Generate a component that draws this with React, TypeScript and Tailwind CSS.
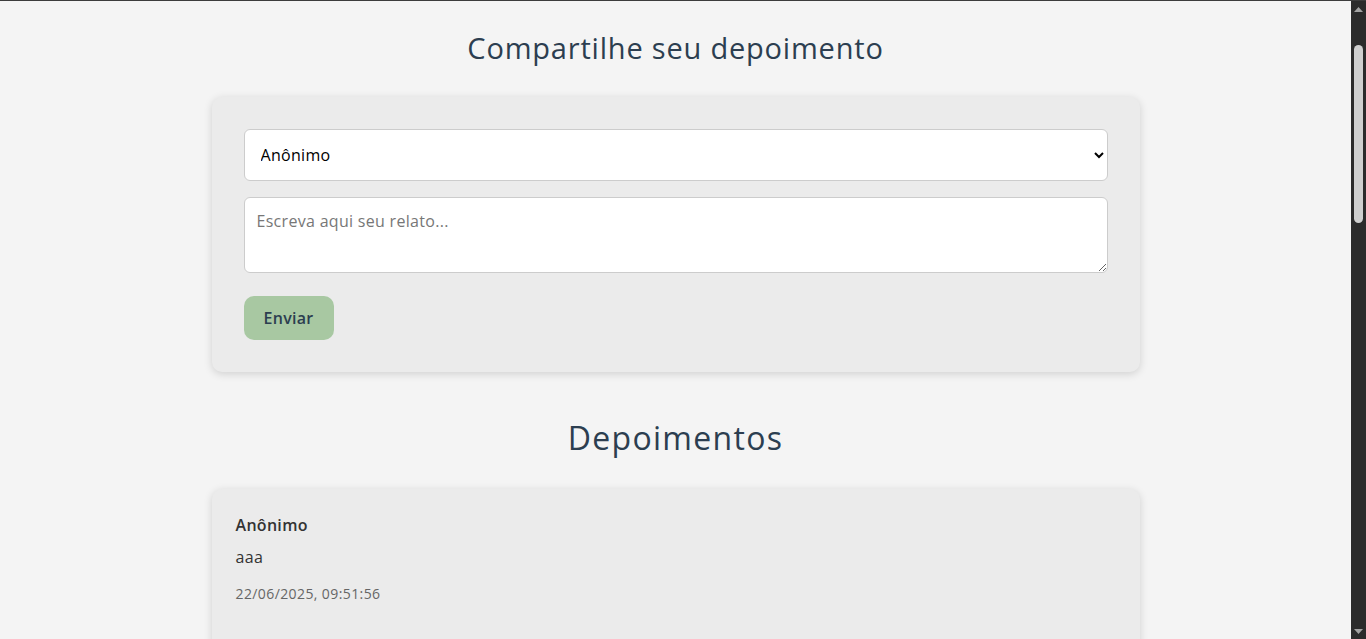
import { useState } from 'react'

type Depoimento = {
  id: number
  autor: string
  texto: string
  data: string
}

const depoimentos: Depoimento[] = [
  { id: 1, autor: 'Anônimo', texto: 'aaa', data: '22/06/2025, 09:51:56' },
]

// the page's dark scrollbar, drawn
function Scrollbar() {
  return (
    <div className="flex w-[15px] shrink-0 flex-col items-center bg-[#2b2b2b]">
      <svg width="9" height="5" viewBox="0 0 9 5" className="mt-[6px]">
        <path d="M4.5 0 9 5H0z" fill="#a3a3a3" />
      </svg>
      <div className="mt-[33px] h-[178px] w-[9px] rounded-full bg-[#cfcfcf]" />
      <div className="flex-1" />
      <svg width="9" height="5" viewBox="0 0 9 5" className="mb-[5px]">
        <path d="M0 0h9L4.5 5z" fill="#a3a3a3" />
      </svg>
    </div>
  )
}

export default function App() {
  const [autor, setAutor] = useState('Anônimo')
  const [texto, setTexto] = useState('')

  return (
    <div className="flex h-[639px] overflow-hidden border-t border-[#3c3c3c]">
      <div
        className="min-w-0 flex-1 bg-[#f4f4f4] px-4 pt-[29px] pb-16 text-[#2c3e50]"
        style={{ fontFamily: '"Open Sans", "DejaVu Sans", sans-serif' }}
      >
        {/* Form */}
        <h2 className="text-center text-[29px] leading-[35px] font-normal tracking-[0.8px] text-[#2c3e50]">
          Compartilhe seu depoimento
        </h2>

        <form
          className="mx-auto mt-[32px] max-w-[928px] rounded-[10px] bg-[#ebebeb] p-8 shadow-[0_2px_8px_rgba(0,0,0,0.15)]"
          onSubmit={e => e.preventDefault()}
        >
          <select
            value={autor}
            onChange={e => setAutor(e.target.value)}
            className="block h-[52px] w-full rounded-[6px] border border-[#cccccc] bg-white px-3 text-base tracking-[0.3px] text-black"
          >
            <option>Anônimo</option>
            <option>Identificado</option>
          </select>

          <textarea
            value={texto}
            onChange={e => setTexto(e.target.value)}
            placeholder="Escreva aqui seu relato..."
            className="mt-4 block h-[76px] w-full rounded-[6px] border border-[#cccccc] bg-white px-3 py-[13px] text-base leading-5 tracking-[0.3px] text-black placeholder:text-[#777777]"
          />

          <button
            type="submit"
            className="mt-[23px] h-[44px] w-[90px] rounded-[10px] bg-[#a8c8a2] text-base font-semibold tracking-[0.3px] text-[#2c3e50]"
          >
            Enviar
          </button>
        </form>

        {/* Lista */}
        <h2 className="mt-[46px] text-center text-[32px] leading-[39px] font-normal tracking-[1.3px] text-[#2c3e50]">
          Depoimentos
        </h2>

        <div className="mx-auto mt-[32px] flex max-w-[928px] flex-col gap-5">
          {depoimentos.map(d => (
            <div
              key={d.id}
              className="min-h-[200px] rounded-[10px] bg-[#ebebeb] p-6 shadow-[0_2px_8px_rgba(0,0,0,0.15)]"
            >
              <p className="text-base leading-6 font-semibold tracking-[0.3px] text-[#333333]">{d.autor}</p>
              <p className="mt-2 text-base leading-6 tracking-[0.3px] text-[#333333]">{d.texto}</p>
              <p className="mt-[15px] text-sm leading-5 tracking-[0.4px] text-[#666666]">{d.data}</p>
            </div>
          ))}
        </div>
      </div>
      <Scrollbar />
    </div>
  )
}
